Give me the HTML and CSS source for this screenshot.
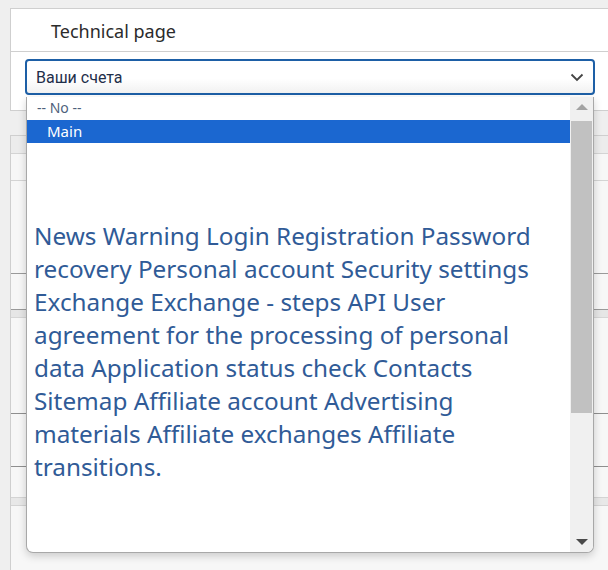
FILE: index.html
```html
<!DOCTYPE html>
<html>
<head>
<meta charset="utf-8">
<link rel="stylesheet" href="styles.css">
</head>
<body>
<div class="page">
  <section class="card top-card">
    <h1 class="title">Technical page</h1>
    <div class="select-row">
      <div class="select">
        <span class="select-text">Ваши счета</span>
        <svg class="chev" width="14" height="9" viewBox="0 0 14 9"><path d="M1.5 1.5 L7 7 L12.5 1.5" fill="none" stroke="#444" stroke-width="1.8"/></svg>
      </div>
    </div>
  </section>
  <section class="card body-card">
    <div class="row r1"></div>
    <div class="row r2"></div>
    <div class="row r3"></div>
    <div class="row r4"></div>
    <div class="row r5"></div>
    <div class="row r6"></div>
    <div class="row r7"></div>
    <div class="row r8"></div>
    <div class="row r9"></div>
  </section>

  <div class="dropdown">
    <div class="list">
      <div class="opt none">-- No --</div>
      <div class="opt sel">Main</div>
      <p class="desc">News Warning Login Registration Password recovery Personal account Security settings Exchange Exchange - steps API User agreement for the processing of personal data Application status check Contacts Sitemap Affiliate account Advertising materials Affiliate exchanges Affiliate transitions.</p>
    </div>
    <div class="scrollbar">
      <div class="arrow up"></div>
      <div class="thumb"></div>
      <div class="arrow down"></div>
    </div>
  </div>
</div>
</body>
</html>
```
FILE: styles.css
```css
html, body {
  margin: 0;
  padding: 0;
}
body {
  background: #efefef;
  font-family: "Noto Sans", "Open Sans", sans-serif;
  width: 608px;
  height: 570px;
  overflow: hidden;
}
.page {
  position: relative;
  padding: 8px 0 0 10px;
}
.card {
  background: #fff;
  border: 1px solid #cfcfcf;
  border-right: none;
}
.top-card {
  height: 101px;
}
.title {
  margin: 0;
  height: 43px;
  box-sizing: border-box;
  padding: 11px 0 0 40px;
  font-size: 18px;
  font-weight: 400;
  color: #2b2b2b;
  line-height: 22px;
  border-bottom: 1px solid #cfcfcf;
}
.select-row {
  padding: 7px 13px 0 14px;
}
.select {
  height: 36px;
  box-sizing: border-box;
  border: 2px solid #1d5fa6;
  border-radius: 4px;
  background: linear-gradient(#ffffff 55%, #f1f1f1);
  display: flex;
  align-items: center;
  justify-content: space-between;
  padding: 0 9px 0 9px;
}
.select-text {
  font-family: Roboto, "Noto Sans", sans-serif;
  font-size: 16px;
  color: #1f2f4a;
}
.chev {
  margin-top: 1px;
}
.body-card {
  margin-top: 24px;
  height: 440px;
  background: #f7f7f7;
  display: flex;
  flex-direction: column;
}
.row {
  border-bottom: 1px solid #c9c9c9;
}
.r1 { height: 17px; border-color: #d4d4d4; background: #ececec; }
.r2 { height: 26px; border-color: #d4d4d4; }
.r3 { height: 92px; border-color: #9a9a9a; }
.r4 { height: 35px; border-color: #9a9a9a; }
.r5 { height: 7px; border-color: #d6d6d6; background: #e6e6e6; }
.r6 { height: 95px; border-color: #8f8f8f; }
.r7 { height: 52px; border-color: #8f8f8f; }
.r8 { height: 30px; border-color: #d4d4d4; }
.r9 { height: 7px; border-color: #d4d4d4; background: #e8e8e8; }

.dropdown {
  position: absolute;
  left: 26px;
  top: 97px;
  width: 568px;
  height: 456px;
  box-sizing: border-box;
  background: #fff;
  border: 1px solid #a8a8a8;
  border-top: none;
  border-radius: 0 0 7px 7px;
  box-shadow: 0 3px 8px rgba(0,0,0,0.18);
  display: flex;
  overflow: hidden;
}
.list {
  flex: 1;
  display: flex;
  flex-direction: column;
}
.opt {
  height: 22px;
  line-height: 22px;
  padding-left: 10px;
  font-size: 14px;
}
.none {
  color: #4f5f7c;
  height: 23px;
  line-height: 21px;
}
.sel {
  background: #1b67d0;
  color: #fff;
  padding-left: 20px;
  font-size: 15px;
  height: 23px;
  line-height: 23px;
}
.desc {
  margin: 76px 0 0 7px;
  font-size: 24.3px;
  line-height: 33px;
  color: #305b97;
  padding-right: 30px;
}
.scrollbar {
  width: 23px;
  background: #f0f0f0;
  display: flex;
  flex-direction: column;
  align-items: center;
}
.arrow {
  width: 0;
  height: 0;
  border-left: 6px solid transparent;
  border-right: 6px solid transparent;
}
.up {
  margin-top: 7px;
  border-bottom: 6px solid #a3a3a3;
}
.thumb {
  margin-top: 11px;
  width: 21px;
  height: 292px;
  background: #c1c1c1;
}
.down {
  margin-top: auto;
  margin-bottom: 7px;
  border-top: 6px solid #4a4a4a;
}
```
